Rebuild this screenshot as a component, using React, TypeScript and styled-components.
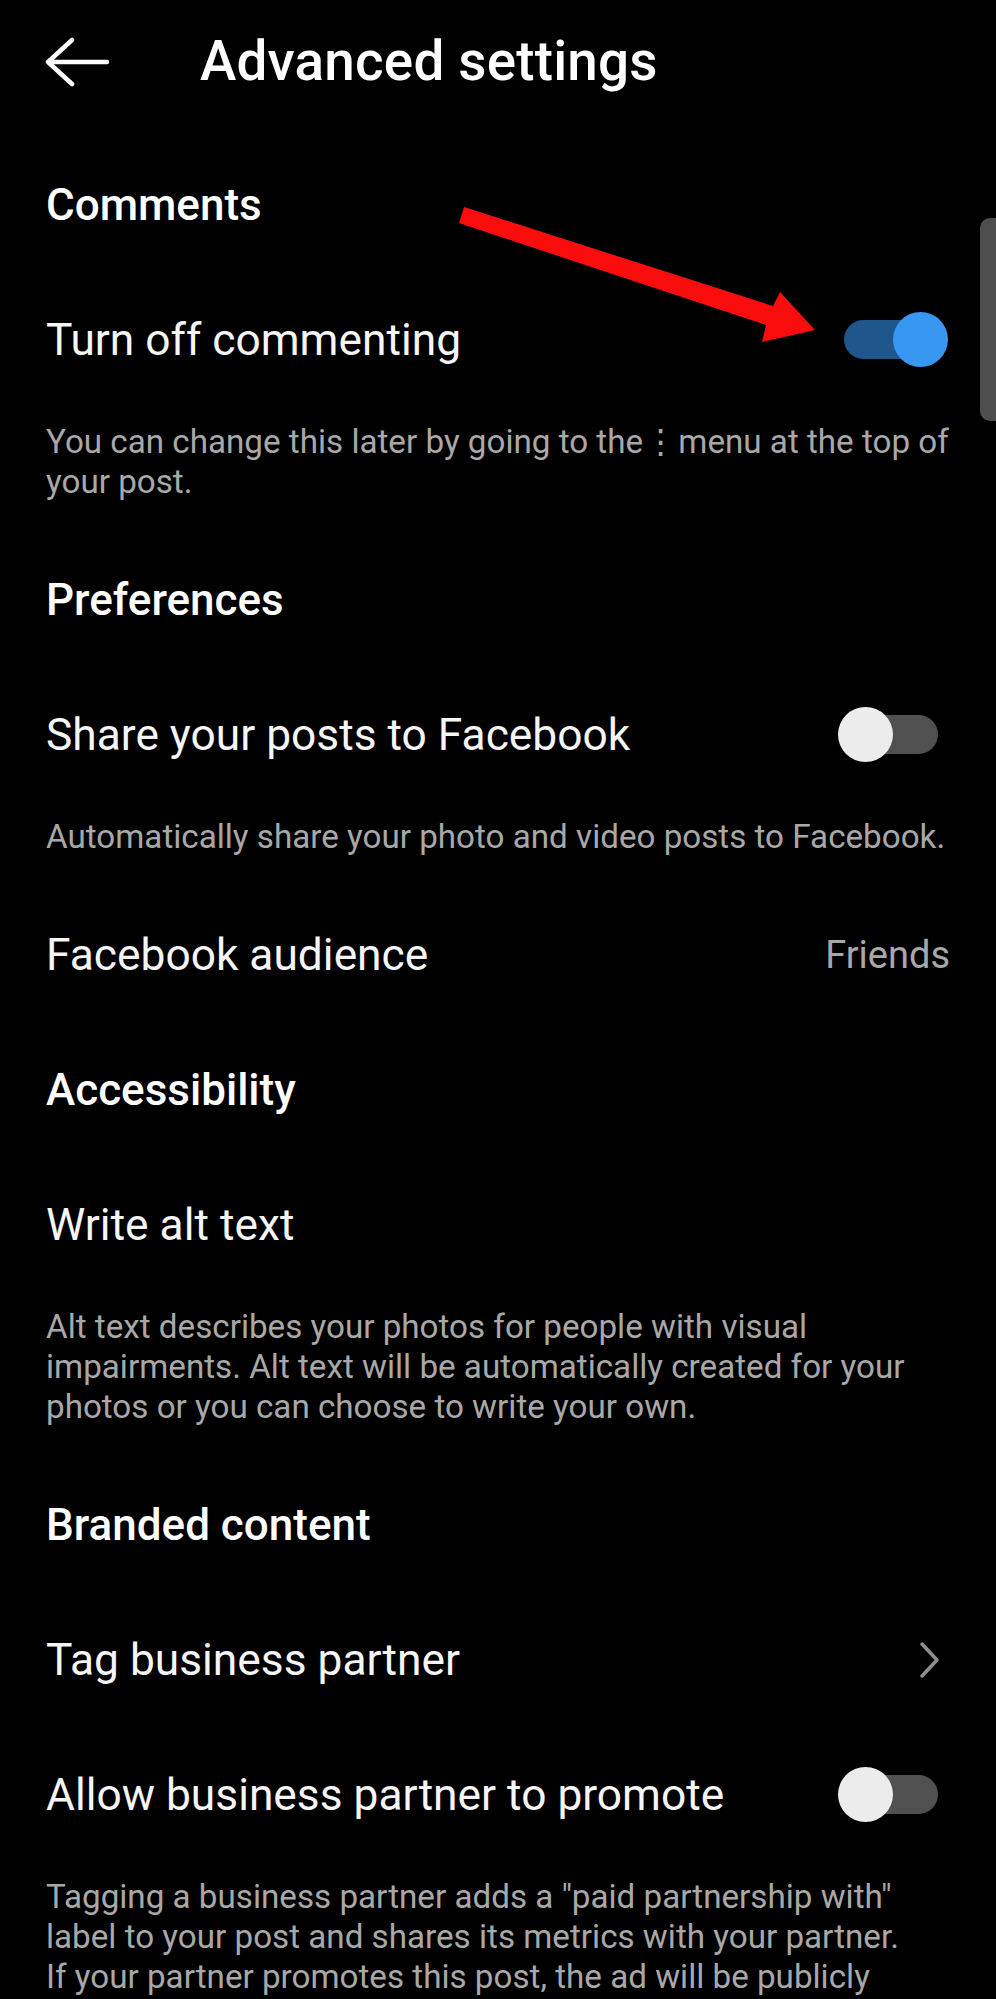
import React from 'react';
import styled, { createGlobalStyle } from 'styled-components';

const GlobalStyle = createGlobalStyle`
    html, body {
        margin: 0;
        padding: 0;
        background: #000;
    }
    body {
        font-family: Roboto, "Noto Sans", "DejaVu Sans", sans-serif;
        -webkit-font-smoothing: antialiased;
    }
`;

const Screen = styled.div`
    position: relative;
    width: 996px;
    min-height: 1999px;
    background: #000;
    color: #f5f5f5;
    overflow: hidden;
`;

const TopBar = styled.div`
    height: 122px;
    display: flex;
    align-items: center;
    padding-left: 44px;
    gap: 90px;
`;

const Title = styled.h1`
    margin: 0;
    font-size: 54.8px;
    font-weight: 500;
    color: #fff;
    letter-spacing: 0.2px;
`;

const Content = styled.div`
    padding: 15px 46px 0 46px;
`;

const SectionTitle = styled.div`
    height: 135px;
    display: flex;
    align-items: center;
    font-size: 44px;
    font-weight: 500;
    color: #fff;
`;

const Row = styled.div`
    height: 135px;
    display: flex;
    align-items: center;
    justify-content: space-between;
`;

const Label = styled.span`
    font-size: 44.3px;
    font-weight: 400;
    color: #f5f5f5;
`;

const Value = styled.span`
    font-size: 38px;
    color: #a8a8a8;
`;

const Description = styled.p`
    margin: 0;
    padding: 15px 0 30px 0;
    font-size: 33.2px;
    line-height: 40px;
    color: #a8a8a8;
    white-space: nowrap;
`;

const Dots = styled.span`
    font-family: "DejaVu Sans", sans-serif;
    font-weight: 400;
    margin: 0 1px;
`;

const SwitchBox = styled.div`
    position: relative;
    width: 110px;
    height: 55px;
    margin-right: 2px;
    flex-shrink: 0;
`;

const Track = styled.div<{ $on?: boolean }>`
    position: absolute;
    left: 6px;
    top: 8px;
    width: 94px;
    height: 39px;
    border-radius: 20px;
    background: ${p => (p.$on ? '#1f568c' : '#505050')};
`;

const Knob = styled.div<{ $on?: boolean }>`
    position: absolute;
    top: 0;
    ${p => (p.$on ? 'right: 0;' : 'left: 0;')}
    width: 55px;
    height: 55px;
    border-radius: 50%;
    background: ${p => (p.$on ? '#3897f0' : '#ececec')};
`;

const Chevron = styled.svg`
    width: 22px;
    height: 38px;
    margin-right: 9px;
`;

const ScrollThumb = styled.div`
    position: absolute;
    right: 0;
    top: 218px;
    width: 16px;
    height: 203px;
    background: #4e4e4e;
    border-radius: 10px 0 0 10px;
`;

const Annotation = styled.svg`
    position: absolute;
    left: 0;
    top: 0;
    width: 996px;
    height: 400px;
    pointer-events: none;
`;

const Toggle = ({ on }: { on?: boolean }) => (
    <SwitchBox>
        <Track $on={on} />
        <Knob $on={on} />
    </SwitchBox>
);

const BackArrow = () => (
    <svg width="66" height="50" viewBox="0 0 66 50" style={{ marginTop: 2 }}>
        <path
            d="M4 25 H63 M28 3 L4 25 L28 47"
            fill="none"
            stroke="#fff"
            strokeWidth="4.5"
            strokeLinecap="round"
            strokeLinejoin="round"
        />
    </svg>
);

const App = () => {
    return (
        <Screen>
            <GlobalStyle />
            <TopBar>
                <BackArrow />
                <Title>Advanced settings</Title>
            </TopBar>

            <Content>
                <SectionTitle>Comments</SectionTitle>
                <Row>
                    <Label>Turn off commenting</Label>
                    <Toggle on />
                </Row>
                <Description>
                    You can change this later by going to the<Dots>⋮</Dots>menu at the top of<br />
                    your post.
                </Description>

                <SectionTitle>Preferences</SectionTitle>
                <Row>
                    <Label>Share your posts to Facebook</Label>
                    <Toggle />
                </Row>
                <Description>Automatically share your photo and video posts to Facebook.</Description>
                <Row>
                    <Label>Facebook audience</Label>
                    <Value>Friends</Value>
                </Row>

                <SectionTitle>Accessibility</SectionTitle>
                <Row>
                    <Label>Write alt text</Label>
                </Row>
                <Description>
                    Alt text describes your photos for people with visual<br />
                    impairments. Alt text will be automatically created for your<br />
                    photos or you can choose to write your own.
                </Description>

                <SectionTitle>Branded content</SectionTitle>
                <Row>
                    <Label>Tag business partner</Label>
                    <Chevron viewBox="0 0 22 38">
                        <path
                            d="M3 3 L18 19 L3 35"
                            fill="none"
                            stroke="#8e8e8e"
                            strokeWidth="3.5"
                            strokeLinecap="round"
                            strokeLinejoin="round"
                        />
                    </Chevron>
                </Row>
                <Row>
                    <Label>Allow business partner to promote</Label>
                    <Toggle />
                </Row>
                <Description>
                    Tagging a business partner adds a "paid partnership with"<br />
                    label to your post and shares its metrics with your partner.<br />
                    If your partner promotes this post, the ad will be publicly
                </Description>
            </Content>

            <ScrollThumb />

            {/* red pointer drawn on top of the screenshot */}
            <Annotation viewBox="0 0 996 400">
                <polygon
                    points="464,207 773,306 780,292 815,330 762,342 766,325 459,223"
                    fill="#fb0d0d"
                />
            </Annotation>
        </Screen>
    );
};

export default App;
